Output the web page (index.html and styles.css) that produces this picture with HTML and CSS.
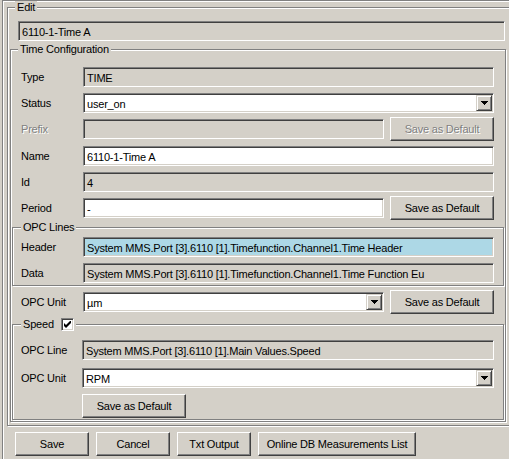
FILE: index.html
```html
<!DOCTYPE html>
<html>
<head>
<meta charset="utf-8">
<link rel="stylesheet" href="styles.css">
</head>
<body>
<div class="window">
  <fieldset class="group edit">
    <legend>Edit</legend>
    <div class="field ro edit-name">6110-1-Time A</div>
    <fieldset class="group tc">
      <legend>Time Configuration</legend>
      <div class="row first">
        <span class="lbl">Type</span>
        <div class="field ro">TIME</div>
      </div>
      <div class="row">
        <span class="lbl">Status</span>
        <div class="field combo"><span class="val">user_on</span><span class="dd"><svg width="7" height="4" viewBox="0 0 7 4"><path d="M0 0h7v1h-1v1h-1v1h-1v1h-1v-1h-1v-1h-1v-1h-1z" fill="#000"/></svg></span></div>
      </div>
      <div class="row">
        <span class="lbl dis">Prefix</span>
        <div class="field ro short"></div>
        <button class="btn dis" disabled>Save as Default</button>
      </div>
      <div class="row gap7">
        <span class="lbl">Name</span>
        <div class="field">6110-1-Time A</div>
      </div>
      <div class="row">
        <span class="lbl">Id</span>
        <div class="field ro">4</div>
      </div>
      <div class="row">
        <span class="lbl">Period</span>
        <div class="field short">-</div>
        <button class="btn">Save as Default</button>
      </div>
      <fieldset class="group inner opc">
        <legend>OPC Lines</legend>
        <div class="row r3">
          <span class="lbl">Header</span>
          <div class="field hl">System MMS.Port [3].6110 [1].Timefunction.Channel1.Time Header</div>
        </div>
        <div class="row">
          <span class="lbl">Data</span>
          <div class="field ro">System MMS.Port [3].6110 [1].Timefunction.Channel1.Time Function Eu</div>
        </div>
      </fieldset>
      <div class="row">
        <span class="lbl">OPC Unit</span>
        <div class="field combo short"><span class="val">µm</span><span class="dd"><svg width="7" height="4" viewBox="0 0 7 4"><path d="M0 0h7v1h-1v1h-1v1h-1v1h-1v-1h-1v-1h-1v-1h-1z" fill="#000"/></svg></span></div>
        <button class="btn">Save as Default</button>
      </div>
      <fieldset class="group inner speed">
        <legend class="chk-legend"><span>Speed</span><span class="chk"><svg width="7" height="7" viewBox="0 0 7 7"><path d="M0 2L2 4L7 -1L7 2L2 7L0 5Z" fill="#000"/></svg></span></legend>
        <div class="row r9">
          <span class="lbl">OPC Line</span>
          <div class="field ro">System MMS.Port [3].6110 [1].Main Values.Speed</div>
        </div>
        <div class="row r8">
          <span class="lbl">OPC Unit</span>
          <div class="field combo"><span class="val">RPM</span><span class="dd"><svg width="7" height="4" viewBox="0 0 7 4"><path d="M0 0h7v1h-1v1h-1v1h-1v1h-1v-1h-1v-1h-1v-1h-1z" fill="#000"/></svg></span></div>
        </div>
        <div class="row btnrow">
          <button class="btn">Save as Default</button>
        </div>
      </fieldset>
    </fieldset>
  </fieldset>
  <div class="actions">
    <button class="btn">Save</button>
    <button class="btn">Cancel</button>
    <button class="btn">Txt Output</button>
    <button class="btn wide">Online DB Measurements List</button>
  </div>
</div>
</body>
</html>
```
FILE: styles.css
```css
* { box-sizing: border-box; }
html, body { margin: 0; padding: 0; }
body {
  width: 509px;
  height: 459px;
  overflow: hidden;
  background: #d4d0c8;
  color: #000;
  font-family: "Liberation Sans", Arial, sans-serif;
  font-size: 11px;
  line-height: 13px;
  letter-spacing: -0.2px;
}
.window {
  margin-left: 2px;
  height: 459px;
  border-top: 1px solid #808080;
  border-left: 1px solid #808080;
  box-shadow: inset 1px 1px 0 #fff;
}
.group {
  margin: 0;
  padding: 0;
  min-width: 0;
  border: 1px solid #808080;
  box-shadow: inset 1px 1px 0 #fff, 1px 1px 0 #fff;
}
.group > legend {
  padding: 0 2px;
  margin-left: 7px;
  height: 13px;
  line-height: 13px;
  background: #d4d0c8;
}
.edit {
  margin-left: 4px;
  width: 506px;
  padding: 7px 0 3px 0;
}
.edit-name {
  margin-left: 10px;
  width: 487px !important;
}
.tc {
  margin: 2px 0 0 2px;
  width: 496px;
  padding: 0 0 1px 0;
}
.inner {
  margin-left: 1px;
  width: 492px;
}
.inner > legend { margin-left: 8px; }
.opc { margin-top: 3px; padding: 0 0 2px 0; }
.speed { margin-top: 6px; padding: 0 0 1px 0; }
.chk-legend {
  display: flex;
  align-items: center;
}
.chk {
  width: 13px;
  height: 13px;
  margin-left: 7px;
  background: #fff;
  border: 1px solid;
  border-color: #808080 #fff #fff #808080;
  box-shadow: inset 1px 1px 0 #404040, inset -1px -1px 0 #d4d0c8;
  display: flex;
  align-items: center;
  justify-content: center;
}
.chk svg { display: block; }
.row {
  display: flex;
  align-items: center;
  height: 20px;
  margin-top: 6px;
}
.row.first { margin-top: 11px; }
.row.gap7 { margin-top: 7px; }
.row.r3 { margin-top: 3px; }
.row.r9 { margin-top: 9px; }
.row.r8 { margin-top: 8px; }
.row.btnrow { height: 24px; padding-left: 69px; }
.lbl {
  flex: none;
  width: 72px;
  padding-left: 10px;
  white-space: nowrap;
}
.inner .lbl { width: 70px; padding-left: 8px; }
.speed .lbl { width: 69px; }
.field {
  flex: none;
  width: 411px;
  height: 20px;
  padding: 3px 0 0 3px;
  line-height: 15px;
  white-space: nowrap;
  overflow: hidden;
  background: #fff;
  border: 1px solid;
  border-color: #808080 #fff #fff #808080;
  box-shadow: inset 1px 1px 0 #404040, inset -1px -1px 0 #d4d0c8;
}
.speed .field { width: 412px; }
.field.short { width: 301px; }
.ro { background: #d4d0c8; }
.hl { background: #add8e6; }
.combo {
  display: flex;
  padding: 0;
}
.combo .val {
  flex: 1;
  padding: 3px 0 0 3px;
}
.dd {
  flex: none;
  width: 16px;
  height: 16px;
  margin: 1px;
  background: #d4d0c8;
  border: 1px solid;
  border-color: #d4d0c8 #404040 #404040 #d4d0c8;
  box-shadow: inset 1px 1px 0 #fff, inset -1px -1px 0 #808080;
  display: flex;
  align-items: center;
  justify-content: center;
}
.dd svg { display: block; }
.btn {
  flex: none;
  width: 104px;
  height: 24px;
  margin: 0 0 0 6px;
  padding: 0;
  font: inherit;
  letter-spacing: inherit;
  color: #000;
  background: #d4d0c8;
  border: 1px solid;
  border-color: #fff #404040 #404040 #fff;
  box-shadow: inset -1px -1px 0 #808080;
}
.btnrow .btn { margin-left: 0; }
.dis { color: #808080; text-shadow: 1px 1px 0 #fff; }
.btn.dis { color: #808080; }
.actions {
  display: flex;
  gap: 7px;
  margin: 6px 0 0 12px;
}
.actions .btn { width: 74px; margin: 0; }
.actions .btn.wide { width: 158px; }
```
